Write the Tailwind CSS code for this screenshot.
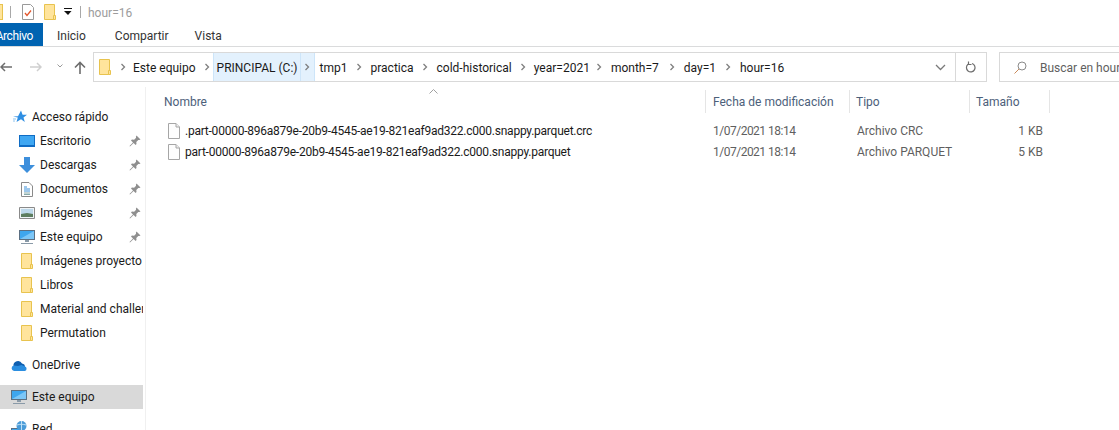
<!DOCTYPE html>
<html lang="es">
<head>
    <meta charset="UTF-8">
    <meta name="viewport" content="width=device-width, initial-scale=1.0">
    <title>hour=16</title>
    <script src="https://cdn.jsdelivr.net/npm/@tailwindcss/browser@4"></script>
</head>
<body class="bg-white w-[1119px] h-[430px] overflow-hidden font-['Roboto',sans-serif] text-[12px] leading-[16px] text-[#1a1a1a]">
    <svg class="hidden">
        <symbol id="folder" viewBox="0 0 14 16">
            <path d="M1.500 .5h10v15h-10z" fill="#ffe49c" stroke="#e8c34e"/>
            <path d="M10.500 11.500h2v4h-2z" fill="#ffe49c" stroke="#e8c34e"/>
        </symbol>
        <symbol id="pin" viewBox="0 0 12 12">
            <path d="M7.500 .5l4 4-1.200 .6-1-.2-2 2 .2 2.200-.9 .9-2-2L1 11.500 .5 11l3.500-3.600-2-2 .9-.9 2.200 .2 2-2-.2-1z" fill="#8f8f8f"/>
        </symbol>
        <symbol id="sep" viewBox="0 0 6 8">
            <path d="M1.500 1l3 3-3 3" fill="none" stroke="#7f7f7f" stroke-width="1.300"/>
        </symbol>
        <symbol id="monitor" viewBox="0 0 16 16">
            <path d="M0 1h16v10H0z" fill="#5b6f82"/>
            <path d="M1 2h14v8H1z" fill="#3ea6ee"/>
            <path d="M1 10l14-8v8z" fill="#7cc6f7"/>
            <path d="M6 11h4v2H6z" fill="#8a9aa8"/>
            <path d="M2 14h12v1H2z" fill="#8a9aa8"/>
        </symbol>
        <symbol id="file" viewBox="0 0 12 16">
            <path d="M.5 .5h7.500l3.500 3.500v11.500H.5z" fill="#fdfdfd" stroke="#a6a6a6"/>
            <path d="M8 .5v3.500h3.500" fill="#eee" stroke="#a6a6a6"/>
        </symbol>
    </svg>

    <!-- title bar -->
    <div class="h-[23px] flex items-center">
        <div class="w-[3px] h-[16px] shrink-0 bg-[#ffe49c] border-r border-y border-[#e8c34e]"></div>
        <div class="w-px h-[12px] bg-[#a8a8a8] ml-[7px]"></div>
        <svg class="w-[12px] h-[16px] ml-[11px]" viewBox="0 0 12 16">
            <path d="M.5 .5h8l3 3v12H.5z" fill="#fff" stroke="#9a9a9a"/>
            <path d="M3 9l2 2.500 4-5" fill="none" stroke="#e2552b" stroke-width="1.300"/>
        </svg>
        <svg class="w-[14px] h-[16px] ml-[9px]"><use href="#folder"/></svg>
        <svg class="w-[8px] h-[7px] ml-[7px]" viewBox="0 0 8 7">
            <path d="M0 0h8v1H0z" fill="#111"/>
            <path d="M0 3h7.500L4 7z" fill="#111"/>
        </svg>
        <div class="w-px h-[12px] bg-[#a8a8a8] ml-[8px]"></div>
        <span class="ml-[7px] pt-[2px] text-[#9c9c9c]">hour=16</span>
    </div>

    <!-- ribbon tabs -->
    <div class="h-[24px] flex items-stretch border-b border-[#dadbdc] pt-[2px]">
        <div class="w-[43px] -mt-[2px] pt-[2px] bg-[#0063b1] text-white flex items-center justify-end pr-[10px] overflow-hidden whitespace-nowrap tracking-[-0.4px]">Archivo</div>
        <div class="flex items-center ml-[14px] text-[#333]">Inicio</div>
        <div class="flex items-center ml-[29px] text-[#333]">Compartir</div>
        <div class="flex items-center ml-[26px] text-[#333]">Vista</div>
    </div>

    <!-- address row -->
    <div class="h-[40px] flex items-center">
        <svg class="w-[12px] h-[10px] shrink-0" viewBox="0 0 12 10"><path d="M12 5H1M5 1L1 5l4 4" fill="none" stroke="#6d6d6d" stroke-width="1.500"/></svg>
        <svg class="w-[12px] h-[10px] ml-[18px] shrink-0" viewBox="0 0 12 10"><path d="M0 5h11M7 1l4 4-4 4" fill="none" stroke="#cfcfcf" stroke-width="1.500"/></svg>
        <svg class="w-[6px] h-[4px] ml-[15px] mb-[3px] shrink-0" viewBox="0 0 6 4"><path d="M.5 .5L3 3 5.500 .5" fill="none" stroke="#9a9a9a"/></svg>
        <svg class="w-[12px] h-[13px] ml-[11px] shrink-0" viewBox="0 0 12 13"><path d="M6 13V1.500M1 6.500l5-5 5 5" fill="none" stroke="#6d6d6d" stroke-width="1.600"/></svg>
        <div class="w-[863px] h-[30px] ml-[7px] border border-[#d9d9d9] flex items-center shrink-0 [&_span]:pt-[2px]">
            <svg class="w-[14px] h-[16px] ml-[4px]"><use href="#folder"/></svg>
            <svg class="w-[6px] h-[8px] ml-[8px]"><use href="#sep"/></svg>
            <span class="ml-[7px]">Este equipo</span>
            <svg class="w-[6px] h-[8px] ml-[8px]"><use href="#sep"/></svg>
            <div class="h-full ml-[3px] flex bg-[#e3f1fd] border-x border-[#cde5f9] shrink-0">
                <span class="w-[87px] pl-[3px] flex items-center border-r border-[#cde5f9] whitespace-nowrap">PRINCIPAL (C:)</span>
                <div class="w-[13px] flex items-center justify-center"><svg class="w-[6px] h-[8px]"><use href="#sep"/></svg></div>
            </div>
            <span class="ml-[5px]">tmp1</span>
            <svg class="w-[6px] h-[8px] ml-[8px]"><use href="#sep"/></svg>
            <span class="ml-[9px]">practica</span>
            <svg class="w-[6px] h-[8px] ml-[8px]"><use href="#sep"/></svg>
            <span class="ml-[9px]">cold-historical</span>
            <svg class="w-[6px] h-[8px] ml-[8px]"><use href="#sep"/></svg>
            <span class="ml-[8px]">year=2021</span>
            <svg class="w-[6px] h-[8px] ml-[6px]"><use href="#sep"/></svg>
            <span class="ml-[9px]">month=7</span>
            <svg class="w-[6px] h-[8px] ml-[10px]"><use href="#sep"/></svg>
            <span class="ml-[9px]">day=1</span>
            <svg class="w-[6px] h-[8px] ml-[9px]"><use href="#sep"/></svg>
            <span class="ml-[9px]">hour=16</span>
            <svg class="w-[11px] h-[7px] ml-auto mr-[9px]" viewBox="0 0 11 7"><path d="M1 1l4.500 4.500L10 1" fill="none" stroke="#7a7a7a" stroke-width="1.300"/></svg>
        </div>
        <div class="w-[31px] h-[30px] border border-l-0 border-[#d9d9d9] flex items-center justify-center shrink-0">
            <svg class="w-[12px] h-[12px]" viewBox="0 0 12 12"><path d="M7 2.500A4.300 4.300 0 1 1 3 3.300M3.500 .5v3h3" fill="none" stroke="#6d6d6d" stroke-width="1.200"/></svg>
        </div>
        <div class="w-[130px] h-[30px] ml-[12px] border border-[#d9d9d9] flex items-center shrink-0 whitespace-nowrap">
            <svg class="w-[13px] h-[13px] ml-[14px] shrink-0" viewBox="0 0 13 13"><circle cx="8" cy="5" r="4" fill="none" stroke="#8a8a8a"/><path d="M5 8l-4.500 4.500" stroke="#c98a5a"/></svg>
            <span class="ml-[13px] pt-[2px] text-[#5f5f5f]">Buscar en hour</span>
        </div>
    </div>

    <!-- body -->
    <div class="flex h-[343px]">
        <!-- nav pane -->
        <div class="w-[146px] shrink-0 border-r border-[#f0f0f0] pt-[18px] overflow-hidden">
            <div class="w-[143px] whitespace-nowrap overflow-hidden">
                <div class="h-[24px] flex items-center pl-[13px]">
                    <svg class="w-[14px] h-[14px]" viewBox="0 0 14 14"><path d="M8 .5l1.600 4.200H14l-3.500 2.800 1.300 4.500L8 9.300 3.500 12l1.300-4.500L0 6.500l5-.2z" fill="#2f8fe3"/><path d="M0 9h3M0 11h2" stroke="#8cc3ef"/></svg>
                    <span class="ml-[5px]">Acceso rápido</span>
                </div>
                <div class="h-[24px] flex items-center pl-[19px]">
                    <svg class="w-[16px] h-[12px]" viewBox="0 0 16 12"><path d="M0 0h16v12H0z" fill="#0f6cc4"/><path d="M1 1h14v9H1z" fill="#3fa7f2"/></svg>
                    <span class="ml-[5px] flex-1">Escritorio</span>
                    <svg class="w-[12px] h-[12px] mr-[2px]"><use href="#pin"/></svg>
                </div>
                <div class="h-[24px] flex items-center pl-[19px]">
                    <svg class="w-[16px] h-[16px]" viewBox="0 0 16 16"><path d="M5 0h6v8h5l-8 8-8-8h5z" fill="#3d8fdc"/></svg>
                    <span class="ml-[5px] flex-1">Descargas</span>
                    <svg class="w-[12px] h-[12px] mr-[2px]"><use href="#pin"/></svg>
                </div>
                <div class="h-[24px] flex items-center pl-[21px]">
                    <svg class="w-[12px] h-[15px]" viewBox="0 0 12 15"><path d="M.5 .5h7.500l3.500 3.500v10.500H.5z" fill="#fff" stroke="#8a8a8a"/><path d="M3 5h3M3 7h6M3 9h6" stroke="#3b8fd8"/><path d="M3 11h6M3 12.500h6" stroke="#8aa"/></svg>
                    <span class="ml-[7px] flex-1">Documentos</span>
                    <svg class="w-[12px] h-[12px] mr-[2px]"><use href="#pin"/></svg>
                </div>
                <div class="h-[24px] flex items-center pl-[19px]">
                    <svg class="w-[16px] h-[12px]" viewBox="0 0 16 12"><path d="M.5 .5h15v11H.5z" fill="#eef4f7" stroke="#8a8a8a"/><path d="M2 2h12v5H2z" fill="#bcd8ea"/><path d="M2 7l6-1 6 1v3H2z" fill="#5c7d5f"/></svg>
                    <span class="ml-[5px] flex-1">Imágenes</span>
                    <svg class="w-[12px] h-[12px] mr-[2px]"><use href="#pin"/></svg>
                </div>
                <div class="h-[24px] flex items-center pl-[19px]">
                    <svg class="w-[16px] h-[16px]"><use href="#monitor"/></svg>
                    <span class="ml-[5px] flex-1">Este equipo</span>
                    <svg class="w-[12px] h-[12px] mr-[2px]"><use href="#pin"/></svg>
                </div>
                <div class="h-[24px] flex items-center pl-[20px]">
                    <svg class="w-[14px] h-[16px] shrink-0"><use href="#folder"/></svg>
                    <span class="ml-[6px]">Imágenes proyecto</span>
                </div>
                <div class="h-[24px] flex items-center pl-[20px]">
                    <svg class="w-[14px] h-[16px] shrink-0"><use href="#folder"/></svg>
                    <span class="ml-[6px]">Libros</span>
                </div>
                <div class="h-[24px] flex items-center pl-[20px]">
                    <svg class="w-[14px] h-[16px] shrink-0"><use href="#folder"/></svg>
                    <span class="ml-[6px]">Material and challenges</span>
                </div>
                <div class="h-[24px] flex items-center pl-[20px]">
                    <svg class="w-[14px] h-[16px] shrink-0"><use href="#folder"/></svg>
                    <span class="ml-[6px]">Permutation</span>
                </div>
                <div class="h-[24px] mt-[8px] flex items-center pl-[11px]">
                    <svg class="w-[16px] h-[11px]" viewBox="0 0 16 11"><path d="M2.500 6a4.500 4.500 0 0 1 8.500-2.500A3.500 3.500 0 0 1 14 7z" fill="#0f5fb0"/><path d="M3 11a2.800 2.800 0 0 1-.2-5.500L7 6l3.500-1 3.500 1.500a2.400 2.400 0 0 1 0 4.500z" fill="#2b8ee0"/></svg>
                    <span class="ml-[5px]">OneDrive</span>
                </div>
                <div class="h-[24px] mt-[8px] flex items-center pl-[11px] bg-[#d9d9d9]">
                    <svg class="w-[16px] h-[16px]"><use href="#monitor"/></svg>
                    <span class="ml-[5px]">Este equipo</span>
                </div>
                <div class="h-[24px] mt-[8px] flex items-center pl-[11px]">
                    <svg class="w-[16px] h-[16px]" viewBox="0 0 16 16"><path d="M0 7h11v7H0z" fill="#5b6f82"/><path d="M1 8h9v5H1z" fill="#3ea6ee"/><circle cx="10.500" cy="5" r="5" fill="#4a9bd8"/><path d="M6 4c3-1 6-1 9 0M10.500 0v10" stroke="#bfe0f5" fill="none"/></svg>
                    <span class="ml-[5px]">Red</span>
                </div>
            </div>
        </div>

        <!-- file list -->
        <div class="flex-1 relative">
            <svg class="absolute left-[283px] top-[2px] w-[9px] h-[5px]" viewBox="0 0 9 5"><path d="M.5 4.500l4-4 4 4" fill="none" stroke="#a0a0a0"/></svg>
            <div class="h-[23px] mt-[3px] flex text-[#4c607a]">
                <div class="w-[560px] pl-[18px] flex items-center border-r border-[#e5e5e5]">Nombre</div>
                <div class="w-[144px] pl-[7px] flex items-center border-r border-[#e5e5e5]">Fecha de modificación</div>
                <div class="w-[120px] pl-[6px] flex items-center border-r border-[#e5e5e5]">Tipo</div>
                <div class="w-[80px] pl-[6px] flex items-center border-r border-[#e5e5e5]">Tamaño</div>
            </div>
            <div class="mt-[7px]">
                <div class="h-[21px] flex items-center">
                    <div class="w-[560px] pl-[22px] flex items-center"><svg class="w-[12px] h-[16px]"><use href="#file"/></svg><span class="ml-[5px] tracking-[-0.235px]">.part-00000-896a879e-20b9-4545-ae19-821eaf9ad322.c000.snappy.parquet.crc</span></div>
                    <div class="w-[144px] pl-[7px] text-[#5f5f5f] tracking-[-0.5px]">1/07/2021 18:14</div>
                    <div class="w-[120px] pl-[7px] text-[#5f5f5f]">Archivo CRC</div>
                    <div class="w-[73px] text-right text-[#5f5f5f]">1 KB</div>
                </div>
                <div class="h-[21px] flex items-center">
                    <div class="w-[560px] pl-[22px] flex items-center"><svg class="w-[12px] h-[16px]"><use href="#file"/></svg><span class="ml-[5px] tracking-[-0.235px]">part-00000-896a879e-20b9-4545-ae19-821eaf9ad322.c000.snappy.parquet</span></div>
                    <div class="w-[144px] pl-[7px] text-[#5f5f5f] tracking-[-0.5px]">1/07/2021 18:14</div>
                    <div class="w-[120px] pl-[7px] text-[#5f5f5f]">Archivo PARQUET</div>
                    <div class="w-[73px] text-right text-[#5f5f5f]">5 KB</div>
                </div>
            </div>
        </div>
    </div>
</body>
</html>
